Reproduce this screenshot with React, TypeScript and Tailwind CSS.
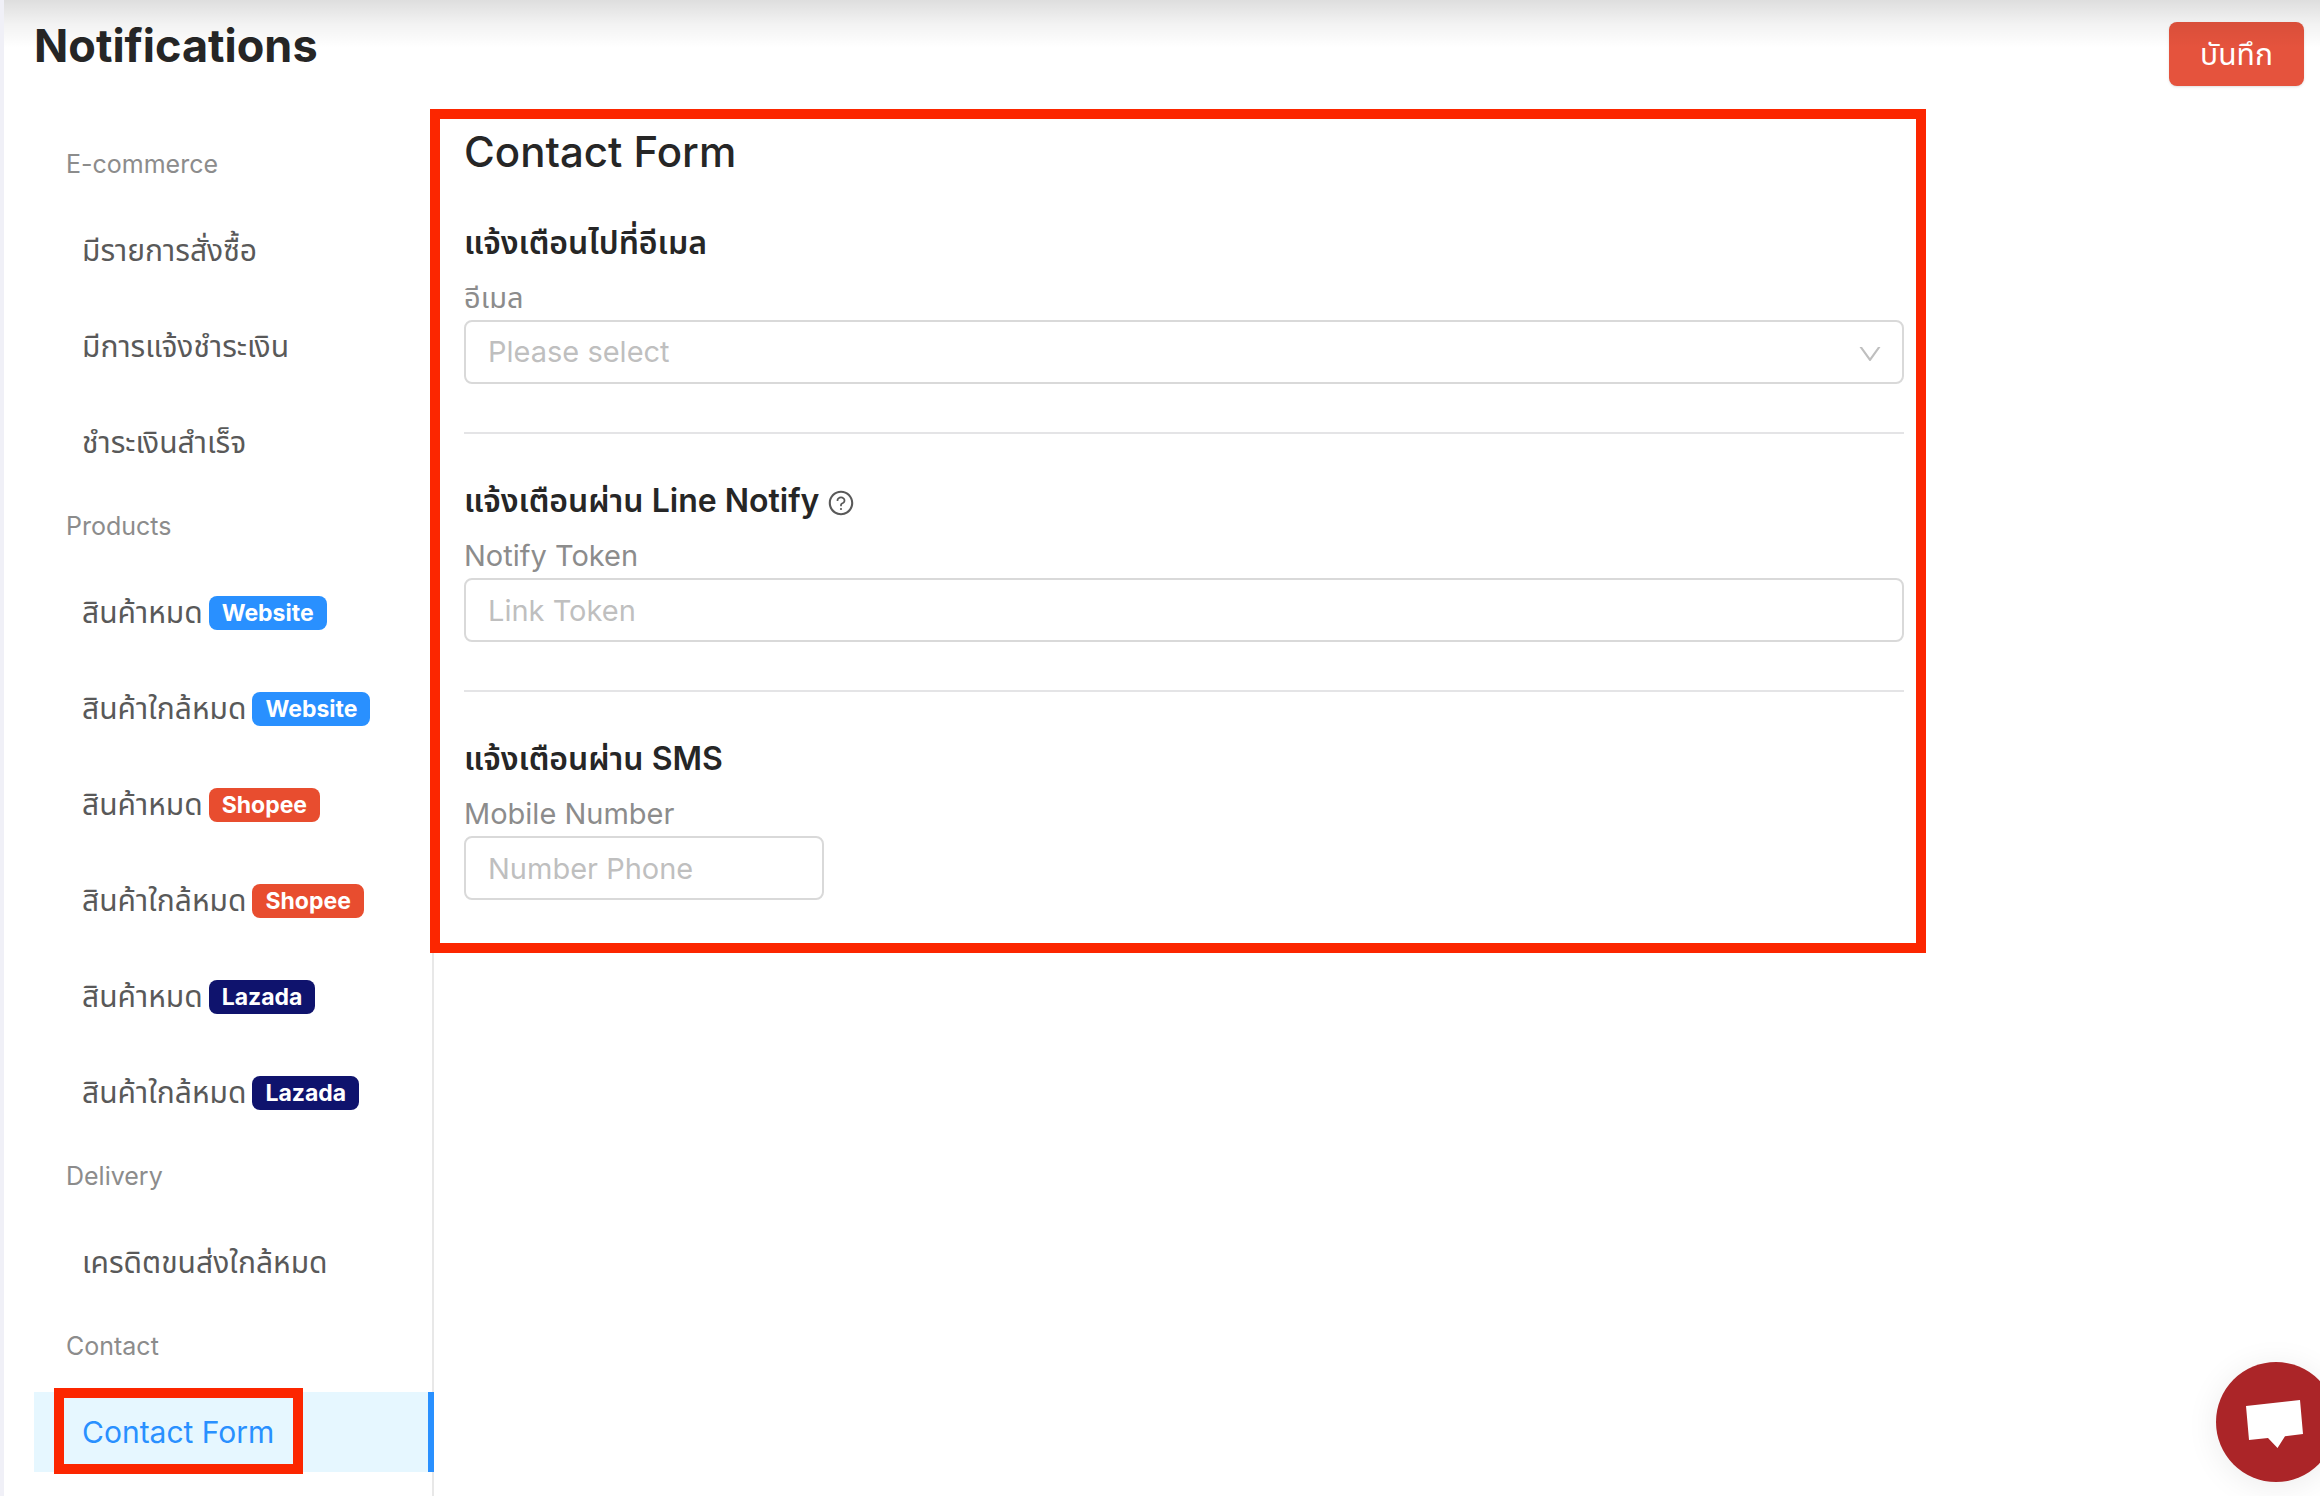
import React from "react";
import { AiOutlineDown, AiOutlineQuestionCircle } from "react-icons/ai";

type MenuItem = {
  label: string;
  badge?: "Website" | "Shopee" | "Lazada";
  active?: boolean;
};

const badgeColors = {
  Website: "bg-[#2990ff]",
  Shopee: "bg-[#e84d2f]",
  Lazada: "bg-[#0f136d]",
};

const menu: { title: string; items: MenuItem[] }[] = [
  {
    title: "E-commerce",
    items: [
      { label: "มีรายการสั่งซื้อ" },
      { label: "มีการแจ้งชำระเงิน" },
      { label: "ชำระเงินสำเร็จ" },
    ],
  },
  {
    title: "Products",
    items: [
      { label: "สินค้าหมด", badge: "Website" },
      { label: "สินค้าใกล้หมด", badge: "Website" },
      { label: "สินค้าหมด", badge: "Shopee" },
      { label: "สินค้าใกล้หมด", badge: "Shopee" },
      { label: "สินค้าหมด", badge: "Lazada" },
      { label: "สินค้าใกล้หมด", badge: "Lazada" },
    ],
  },
  { title: "Delivery", items: [{ label: "เครดิตขนส่งใกล้หมด" }] },
  { title: "Contact", items: [{ label: "Contact Form", active: true }] },
];

const Sidebar: React.FC = () => (
  <nav className="w-[400px] shrink-0 flex flex-col gap-4 border-r-2 border-[#e8e8e8] pt-[27px] pb-6">
    {menu.map((group) => (
      <div key={group.title} className="flex flex-col gap-4">
        <h2 className="h-[58px] flex items-center pl-8 text-[25px] text-[#8c8c8c]">
          {group.title}
        </h2>
        {group.items.map((item, i) => (
          <a
            key={i}
            href="#"
            className={
              item.active
                ? "relative h-20 -mr-0.5 flex items-center pl-12 text-[30px] text-[#2990ff] bg-[#e6f7ff] border-r-6 border-[#2990ff]"
                : "h-20 flex items-center gap-1.5 pl-12 text-[30px] text-[#595959]"
            }
          >
            <span>{item.label}</span>
            {item.badge && (
              <span
                className={`${badgeColors[item.badge]} mt-0.5 h-[34px] flex items-center rounded-lg px-[13px] text-[23px] font-bold text-white`}
              >
                {item.badge}
              </span>
            )}
            {item.active && (
              <span className="absolute left-5 -top-1 -bottom-0.5 w-[249px] border-10 border-[#fc2600]" />
            )}
          </a>
        ))}
      </div>
    ))}
  </nav>
);

const fieldClass =
  "h-16 w-full rounded-lg border-2 border-[#d9d9d9] bg-white px-[22px] text-[29px] text-[#bfbfbf] placeholder:text-[#bfbfbf] outline-none";

const headingClass =
  "flex items-center gap-2 mb-4 text-[32px] leading-[38px] font-semibold text-[#262626]";

const labelClass = "block pb-0.5 text-[29px] leading-10 text-[#8c8c8c]";

const ContactForm: React.FC = () => (
  <form className="relative -ml-1 flex-1 max-w-[1496px] self-start border-10 border-[#fc2600] pl-6 pr-3 pt-2 pb-[43px]">
    <h2 className="text-[42px] leading-[49px] font-medium text-[#262626]">
      Contact Form
    </h2>

    {/* Email */}
    <section className="py-12 border-b-2 border-[#e4e4e6]">
      <h3 className={headingClass}>แจ้งเตือนไปที่อีเมล</h3>
      <label htmlFor="email" className={labelClass}>
        อีเมล
      </label>
      <div className="relative">
        <select id="email" defaultValue="" className={`${fieldClass} appearance-none`}>
          <option value="">Please select</option>
        </select>
        <AiOutlineDown className="absolute right-5 top-5 size-7 text-[#bfbfbf] pointer-events-none" />
      </div>
    </section>

    {/* Line Notify */}
    <section className="py-12 border-b-2 border-[#e4e4e6]">
      <h3 className={headingClass}>
        แจ้งเตือนผ่าน Line Notify
        <AiOutlineQuestionCircle className="mt-1 size-7 text-[#595959]" />
      </h3>
      <label htmlFor="token" className={labelClass}>
        Notify Token
      </label>
      <input id="token" type="text" placeholder="Link Token" className={fieldClass} />
    </section>

    {/* SMS */}
    <section className="pt-12">
      <h3 className={headingClass}>แจ้งเตือนผ่าน SMS</h3>
      <label htmlFor="phone" className={labelClass}>
        Mobile Number
      </label>
      <div className="w-[360px]">
        <input id="phone" type="tel" placeholder="Number Phone" className={fieldClass} />
      </div>
    </section>
  </form>
);

const App: React.FC = () => {
  return (
    <div className="relative min-h-screen flex flex-col overflow-hidden border-l-4 border-[#f0f0f7] bg-white pl-[30px] font-['Inter','Noto_Sans_Thai',sans-serif]">
      <header className="h-[109px] flex items-start justify-between pr-4">
        <h1 className="pt-5 text-[45px] leading-[52px] font-bold text-[#262626]">
          Notifications
        </h1>
        <button
          type="button"
          className="mt-[22px] h-16 w-[135px] rounded-lg bg-[#e5533d] text-[30px] text-white shadow-sm"
        >
          บันทึก
        </button>
      </header>

      <main className="flex-1 flex">
        <Sidebar />
        <ContactForm />
      </main>

      {/* Shadow cast by the top bar */}
      <div className="absolute inset-x-0 top-0 h-12 bg-linear-to-b from-black/13 via-black/5 to-transparent pointer-events-none" />

      <button
        type="button"
        aria-label="Chat"
        className="fixed -right-4 bottom-3.5 size-30 rounded-full bg-[#ab2528] shadow-[0_4px_32px_rgba(0,0,0,0.08)]"
      >
        <svg viewBox="0 0 120 120" className="size-30" fill="#fff">
          <path d="M30 44 84 38 87 72 69 74.3 61.5 86 52 76 33 78Z" />
        </svg>
      </button>
    </div>
  );
};

export default App;
